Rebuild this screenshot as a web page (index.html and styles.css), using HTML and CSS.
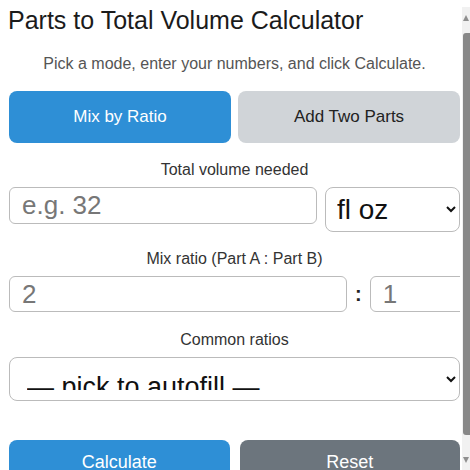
FILE: index.html
```html
<!DOCTYPE html>
<html lang="en">
<head>
  <meta charset="UTF-8" />
  <meta name="viewport" content="width=device-width, initial-scale=1.0"/>
  <title>Parts to Total Volume Calculator</title>
  <link rel="stylesheet" href="styles.css">
</head>
<body>

  <div class="calc-box">
    <h1>Parts to Total Volume Calculator</h1>
    <p class="intro">Pick a mode, enter your numbers, and click Calculate.</p>

    <div class="modes">
      <button class="mode-btn active">Mix by Ratio</button>
      <button class="mode-btn">Add Two Parts</button>
    </div>

    <label class="field-label" for="total">Total volume needed</label>
    <div class="total-row">
      <input type="number" id="total" class="total-input" placeholder="e.g. 32" />
      <select id="unit" class="unit-select">
        <option>fl oz</option>
        <option>ml</option>
        <option>cups</option>
        <option>gal</option>
      </select>
    </div>

    <label class="field-label" for="partA">Mix ratio (Part A : Part B)</label>
    <div class="ratio-row">
      <input type="number" id="partA" class="ratio-input" placeholder="2" />
      <span class="colon">:</span>
      <input type="number" id="partB" class="ratio-input part-b" placeholder="1" />
    </div>

    <label class="field-label" for="preset">Common ratios</label>
    <select id="preset" class="preset-select">
      <option>— pick to autofill —</option>
      <option>1 : 1</option>
      <option>2 : 1</option>
      <option>3 : 1</option>
      <option>4 : 1</option>
    </select>

    <div class="actions">
      <button class="calc-btn">Calculate</button>
      <button class="reset-btn">Reset</button>
    </div>
  </div>

  <!-- page scrollbar, drawn since the screenshot browser hides the real one -->
  <div class="scrollbar" aria-hidden="true">
    <span class="sb-arrow up"></span>
    <span class="sb-thumb"></span>
    <span class="sb-arrow down"></span>
  </div>

</body>
</html>
```

FILE: styles.css
```css
* {
  box-sizing: border-box;
}

html {
  overflow-x: hidden;
}

body {
  margin: 0;
  font-family: "Liberation Sans", Arial, sans-serif;
  color: #222;
  background: #fff;
}

.calc-box {
  width: 451px;
  margin-left: 9px;
  padding: 6px 0 16px;
  overflow: hidden;
}

h1 {
  margin: 0 0 0 -1px;
  font-size: 25px;
  font-weight: normal;
  color: #1b1b1b;
}

.intro {
  margin: 20px 0 18px;
  text-align: center;
  font-size: 16px;
  color: #555;
}

.modes {
  display: grid;
  grid-template-columns: 1fr 1fr;
  gap: 7px;
  margin-bottom: 18px;
}

.mode-btn {
  height: 52px;
  border: none;
  border-radius: 8px;
  background: #d0d4d8;
  color: #222;
  font-family: inherit;
  font-size: 17px;
  cursor: pointer;
}

.mode-btn.active {
  background: #2e8fd6;
  color: #fff;
}

.field-label {
  display: block;
  text-align: center;
  font-size: 16px;
  color: #333;
  margin-bottom: 8px;
}

.total-row {
  display: flex;
  align-items: flex-start;
  gap: 8px;
  margin-bottom: 18px;
}

input {
  min-width: 0;
  border: 1px solid #bbb;
  border-radius: 6px;
  font-family: inherit;
  color: #222;
  background: #fff;
}

input::placeholder {
  color: #777;
}

.total-input {
  flex: 0 0 308px;
  height: 37px;
  padding: 0 12px;
  font-size: 26px;
}

select {
  min-width: 0;
  border: 1px solid #bbb;
  border-radius: 8px;
  background: #fff;
  color: #111;
  font-family: inherit;
}

.unit-select {
  flex: 0 0 135px;
  height: 45px;
  padding: 0 15px 0 7px;
  font-size: 28px;
}

.ratio-row {
  display: flex;
  align-items: center;
  gap: 8px;
  margin-bottom: 19px;
}

.ratio-input {
  flex: 0 0 338px;
  height: 36px;
  padding: 0 12px;
  font-size: 26px;
}

.ratio-input.part-b {
  flex: 0 0 120px;
}

.colon {
  font-size: 20px;
  font-weight: bold;
  color: #222;
}

.preset-select {
  display: block;
  width: 100%;
  height: 44px;
  padding: 13px 15px 10px 13px;
  font-size: 27px;
  margin-bottom: 39px;
}

.actions {
  display: grid;
  grid-template-columns: 1fr 1fr;
  gap: 10px;
}

.calc-btn, .reset-btn {
  height: 44px;
  border: none;
  border-radius: 8px;
  color: #fff;
  font-family: inherit;
  font-size: 18px;
  cursor: pointer;
}

.calc-btn {
  background: #2e8fd6;
}

.reset-btn {
  background: #6c757d;
}

.scrollbar {
  position: fixed;
  top: 7px;
  right: 0;
  bottom: 0;
  width: 8px;
  background: #f1f1f1;
  display: flex;
  flex-direction: column;
  align-items: flex-end;
  padding: 8px 0 7px;
}

.sb-arrow {
  width: 0;
  height: 0;
  margin-right: 1px;
  border-left: 3px solid transparent;
  border-right: 3px solid transparent;
}

.sb-arrow.up {
  border-bottom: 6px solid #8f8f8f;
}

.sb-arrow.down {
  border-top: 6px solid #8f8f8f;
}

.sb-thumb {
  flex: 1;
  width: 7px;
  margin: 12px 0 22px;
  background: #888;
  border-radius: 3px 0 0 3px;
}
```
